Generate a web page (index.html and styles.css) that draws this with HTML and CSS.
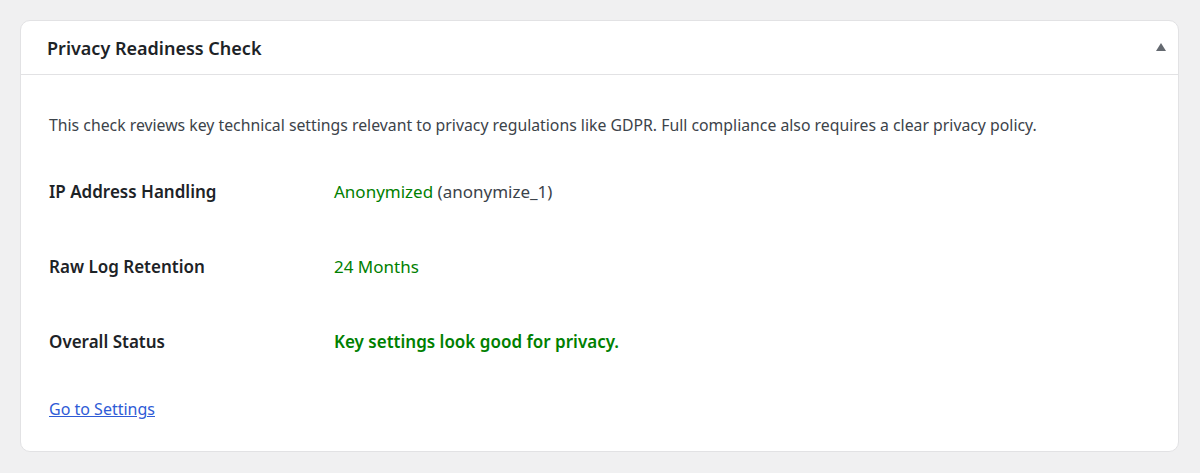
FILE: index.html
```html
<!DOCTYPE html>
<html lang="en">
<head>
<meta charset="utf-8">
<title>Privacy Readiness Check</title>
<link rel="stylesheet" href="styles.css">
</head>
<body>
<div class="card">
  <div class="card-header">
    <h2 class="card-title">Privacy Readiness Check</h2>
    <span class="toggle" aria-hidden="true"></span>
  </div>
  <div class="card-body">
    <p class="desc">This check reviews key technical settings relevant to privacy regulations like GDPR. Full compliance also requires a clear privacy policy.</p>
    <div class="rows">
      <div class="row">
        <div class="label">IP Address Handling</div>
        <div class="value"><span class="ok">Anonymized</span> (anonymize_1)</div>
      </div>
      <div class="row">
        <div class="label">Raw Log Retention</div>
        <div class="value"><span class="ok">24 Months</span></div>
      </div>
      <div class="row">
        <div class="label">Overall Status</div>
        <div class="value"><strong class="ok status">Key settings look good for privacy.</strong></div>
      </div>
    </div>
    <a class="link" href="#">Go to Settings</a>
  </div>
</div>
</body>
</html>
```
FILE: styles.css
```css
html, body {
  margin: 0;
  padding: 0;
  background: #f0f0f1;
  font-family: "Noto Sans", "Open Sans", sans-serif;
}
.card {
  margin: 20px 21px 0 20px;
  background: #fff;
  border: 1px solid #e2e2e4;
  border-radius: 10px;
  box-sizing: border-box;
  height: 432px;
}
.card-header {
  height: 54px;
  box-sizing: border-box;
  border-bottom: 1px solid #e2e2e4;
  display: flex;
  align-items: center;
  justify-content: space-between;
  padding: 0 12px 0 26px;
}
.card-title {
  margin: 0;
  font-size: 18px;
  font-weight: 600;
  color: #1d2327;
}
.toggle {
  width: 0;
  height: 0;
  border-left: 5px solid transparent;
  border-right: 5px solid transparent;
  border-bottom: 8px solid #646970;
  margin-top: -2px;
}
.card-body {
  padding: 39px 28px 0 28px;
}
.desc {
  margin: 0;
  font-size: 15.8px;
  line-height: 22px;
  color: #3c434a;
}
.rows {
  margin-top: 18px;
  margin-bottom: 19px;
}
.row {
  display: grid;
  grid-template-columns: 285px 1fr;
  align-items: center;
  height: 75px;
  font-size: 17px;
}
.label {
  font-weight: 600;
  color: #1d2327;
}
.value {
  color: #3c434a;
}
.ok {
  color: #008000;
}
.status {
  font-weight: 600;
}
.link {
  display: block;
  width: max-content;
  font-size: 16px;
  line-height: 22px;
  color: #2e5bd6;
}
```
